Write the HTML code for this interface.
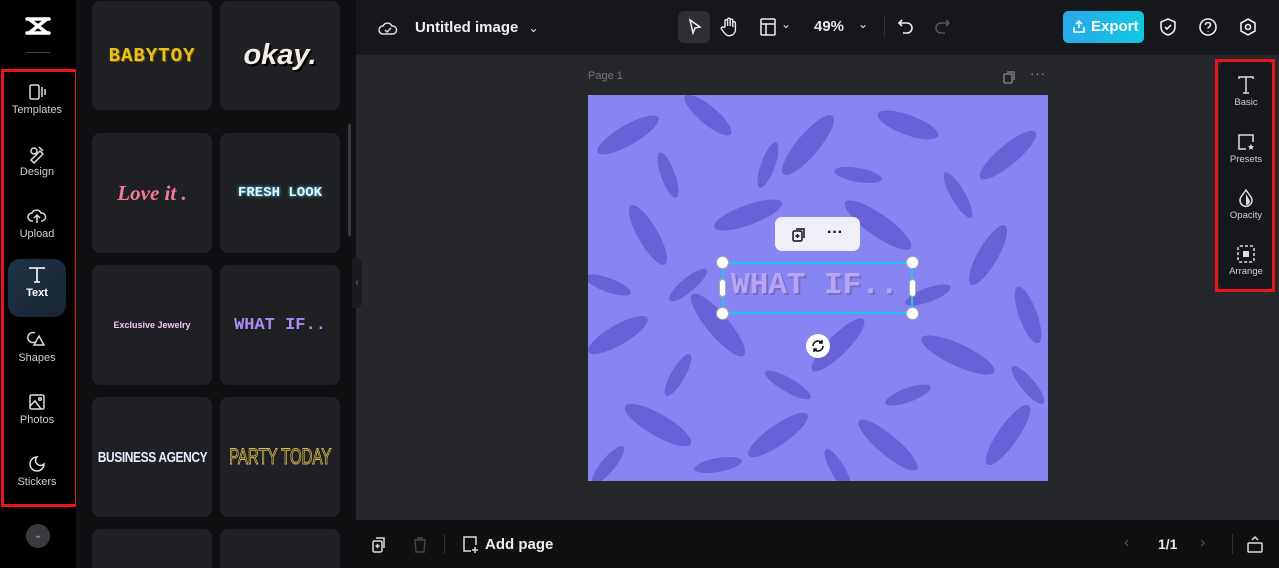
<!DOCTYPE html>
<html style="width:1279px;height:568px;overflow:hidden"><head><meta charset="utf-8"><style>
*{box-sizing:border-box;margin:0;padding:0}
body{width:1279px;height:568px;overflow:hidden;background:#26272b;font-family:"Liberation Sans",sans-serif;position:relative;color:#e6e6e6}
.abs{position:absolute}
#rail{left:0;top:0;width:76px;height:568px;background:#000}
#panel{left:76px;top:0;width:280px;height:568px;background:#0f1012;overflow:hidden}
.card{position:absolute;width:120px;height:120px;background:#1f2024;border-radius:8px;display:flex;align-items:center;justify-content:center;white-space:nowrap}
.nav{position:absolute;left:8px;width:58px;height:58px;text-align:center;font-size:11px;color:#d0d0d0}
.nav svg{display:block;margin:6px auto 2px}
#top{left:356px;top:0;width:923px;height:55px;background:#16171a}
#bot{left:356px;top:520px;width:923px;height:48px;background:#0f1012}
.rp{position:absolute;left:1219px;width:54px;text-align:center;font-size:9.5px;color:#d0d0d0}
.rp svg{display:block;margin:0 auto 2px}
</style></head><body>
<div id="rail" class="abs">
 <svg class="abs" style="left:24px;top:15px" width="28" height="22" viewBox="0 0 28 22"><path d="M3 4h22M3 18h22M5 4l18 14M23 4L5 18" stroke="#fff" stroke-width="3.5" fill="none" stroke-linecap="round"/></svg>
 <div class="abs" style="left:26px;top:52px;width:24px;height:1px;background:#444"></div>
 <div class="nav" style="top:76px"><svg width="20" height="20" viewBox="0 0 20 20" fill="none" stroke="#ddd" stroke-width="1.5"><rect x="3" y="3" width="9" height="14" rx="1.5"/><path d="M15 5v10M18 7v6"/></svg>Templates</div>
 <div class="nav" style="top:138px"><svg width="20" height="20" viewBox="0 0 20 20" fill="none" stroke="#ddd" stroke-width="1.5"><circle cx="7" cy="7" r="3"/><path d="M4 16l9-9 3 3-9 9zM12 3l4 4"/></svg>Design</div>
 <div class="nav" style="top:200px"><svg width="20" height="20" viewBox="0 0 20 20" fill="none" stroke="#ddd" stroke-width="1.5"><path d="M6 15H5a4 4 0 010-8 5 5 0 019 0 4 4 0 011 8h-1M10 17V10M7 12l3-3 3 3"/></svg>Upload</div>
 <div class="nav" style="top:259px;background:linear-gradient(135deg,#1d3448,#1a2430);border-radius:12px;color:#fff;font-weight:bold"><svg width="20" height="20" viewBox="0 0 20 20" fill="none" stroke="#fff" stroke-width="1.6"><path d="M3 4V3h14v1M10 3v14M7 17h6"/></svg>Text</div>
 <div class="nav" style="top:324px"><svg width="20" height="20" viewBox="0 0 20 20" fill="none" stroke="#ddd" stroke-width="1.5"><path d="M8 3a5 5 0 100 9M12 6l5 9H7z"/></svg>Shapes</div>
 <div class="nav" style="top:386px"><svg width="20" height="20" viewBox="0 0 20 20" fill="none" stroke="#ddd" stroke-width="1.5"><rect x="3" y="3" width="14" height="14" rx="1.5"/><circle cx="13" cy="7" r="1.3"/><path d="M3 14l5-5 6 8"/></svg>Photos</div>
 <div class="nav" style="top:448px"><svg width="20" height="20" viewBox="0 0 20 20" fill="none" stroke="#ddd" stroke-width="1.5"><path d="M10 3a7 7 0 107 7 4 4 0 01-7-7z"/></svg>Stickers</div>
 <div class="abs" style="left:1px;top:69px;width:77px;height:438px;border:3px solid #e8161b"></div>
 <div class="abs" style="left:26px;top:524px;width:24px;height:24px;border-radius:50%;background:#3a3b3f;color:#aaa;font-size:10px;text-align:center;line-height:24px">⌄</div>
</div>
<div id="panel" class="abs">
 <div class="card" style="left:16px;top:1px;height:109px"><span style="font:900 19px 'Liberation Mono',monospace;color:#e8c21c;letter-spacing:1px;text-shadow:1px 1px #7a5a00">BABYTOY</span></div>
 <div class="card" style="left:144px;top:1px;height:109px"><span style="font:italic 900 29px 'Liberation Sans';color:#f4efe6;text-shadow:2px 2px #000">okay.</span></div>
 <div class="card" style="left:16px;top:133px"><span style="font:italic bold 21px 'Liberation Serif';color:#f47a9a">Love it .</span></div>
 <div class="card" style="left:144px;top:133px"><span style="font:900 14px 'Liberation Mono';color:#dff6ff;text-shadow:0 0 3px #4fd0f0">FRESH LOOK</span></div>
 <div class="card" style="left:16px;top:265px"><span style="font:bold 9px 'Liberation Sans';color:#f2c8f2">Exclusive Jewelry</span></div>
 <div class="card" style="left:144px;top:265px"><span style="font:900 17px 'Liberation Mono';color:#a98af0">WHAT IF..</span></div>
 <div class="card" style="left:16px;top:397px"><span style="display:inline-block;font:bold 15px 'Liberation Sans';color:#e8ecff;transform:scaleX(.8);letter-spacing:-.5px">BUSINESS AGENCY</span></div>
 <div class="card" style="left:144px;top:397px"><span style="display:inline-block;font:22px 'Liberation Sans';color:#1f2024;-webkit-text-stroke:1px #d8bd52;transform:scaleX(.68)">PARTY TODAY</span></div>
 <div class="card" style="left:16px;top:529px;height:39px;border-radius:8px 8px 0 0"></div>
 <div class="card" style="left:144px;top:529px;height:39px;border-radius:8px 8px 0 0"></div>
 <div class="abs" style="left:272px;top:124px;width:3px;height:112px;background:#3a3b3f;border-radius:2px"></div>
 <div class="abs" style="left:276px;top:258px;width:4px;height:50px;background:#1a1b1e"></div>
</div>
<div class="abs" style="left:352px;top:258px;width:10px;height:50px;background:#1a1b1e;border-radius:0 6px 6px 0;color:#777;font-size:10px;line-height:50px;text-align:center">‹</div>
<div id="top" class="abs">
 <svg class="abs" style="left:22px;top:18px" width="20" height="20" viewBox="0 0 20 20" fill="none" stroke="#ddd" stroke-width="1.5"><path d="M6 16H5a4 4 0 010-8 5 5 0 019 0 4 4 0 011 8H6zM7 12l2 2 4-4"/></svg>
 <div class="abs" style="left:59px;top:19px;font-size:15px;font-weight:bold;color:#eee">Untitled image <span style="font-weight:normal;font-size:12px;margin-left:6px">⌄</span></div>
 <div class="abs" style="left:322px;top:11px;width:32px;height:32px;background:#2e2f33;border-radius:6px"></div>
 <svg class="abs" style="left:330px;top:18px" width="18" height="18" viewBox="0 0 18 18" fill="none" stroke="#eee" stroke-width="1.5"><path d="M4 2l10 7-5 1-2 5z"/></svg>
 <svg class="abs" style="left:364px;top:17px" width="18" height="20" viewBox="0 0 18 20" fill="none" stroke="#eee" stroke-width="1.4"><path d="M5 10V4a1.3 1.3 0 012.6 0v5V2.5a1.3 1.3 0 012.6 0V9V3.5a1.3 1.3 0 012.6 0V10V6a1.3 1.3 0 012.6 0v7a6 6 0 01-11 3l-3-4a1.3 1.3 0 012-1.6z"/></svg>
 <svg class="abs" style="left:404px;top:18px" width="16" height="18" viewBox="0 0 16 18" fill="none" stroke="#eee" stroke-width="1.5"><rect x="1" y="1" width="14" height="16" rx="1"/><path d="M1 6h14M6 6v11"/></svg>
 <div class="abs" style="left:425px;top:17px;font-size:12px">⌄</div>
 <div class="abs" style="left:458px;top:18px;font-size:15px;font-weight:bold">49%</div>
 <div class="abs" style="left:502px;top:17px;font-size:12px">⌄</div>
 <div class="abs" style="left:528px;top:17px;width:1px;height:20px;background:#333"></div>
 <svg class="abs" style="left:541px;top:18px" width="18" height="18" viewBox="0 0 18 18" fill="none" stroke="#eee" stroke-width="1.6"><path d="M5 2L2 5l3 3M2 5h8a5 5 0 010 10H6"/></svg>
 <svg class="abs" style="left:577px;top:18px" width="18" height="18" viewBox="0 0 18 18" fill="none" stroke="#555" stroke-width="1.6"><path d="M13 2l3 3-3 3M16 5H8a5 5 0 000 10h4"/></svg>
 <div class="abs" style="left:707px;top:11px;width:81px;height:32px;border-radius:5px;background:linear-gradient(90deg,#2aa8ea,#10c8e0);color:#fff;font-weight:bold;font-size:15px;line-height:32px;padding-left:28px">Export</div>
 <svg class="abs" style="left:716px;top:19px" width="14" height="15" viewBox="0 0 14 15" fill="none" stroke="#fff" stroke-width="1.5"><path d="M7 9V2M4 5l3-3 3 3M2 8v5h10V8"/></svg>
 <svg class="abs" style="left:802px;top:17px" width="20" height="20" viewBox="0 0 20 20" fill="none" stroke="#eee" stroke-width="1.6"><path d="M10 2l7 3v5c0 4-3 7-7 8-4-1-7-4-7-8V5zM7 10l2 2 4-4"/></svg>
 <svg class="abs" style="left:842px;top:17px" width="20" height="20" viewBox="0 0 20 20" fill="none" stroke="#eee" stroke-width="1.6"><circle cx="10" cy="10" r="8"/><path d="M7.5 8a2.5 2.5 0 115 0c0 1.5-2.5 2-2.5 3.5M10 14v.5"/></svg>
 <svg class="abs" style="left:882px;top:17px" width="20" height="20" viewBox="0 0 20 20" fill="none" stroke="#eee" stroke-width="1.6"><path d="M10 2l7 4v8l-7 4-7-4V6z"/><circle cx="10" cy="10" r="2.5"/></svg>
</div>
<div class="abs" style="left:588px;top:70px;font-size:11px;color:#777">Page 1</div>
<svg class="abs" style="left:1002px;top:70px" width="14" height="14" viewBox="0 0 14 14" fill="none" stroke="#888" stroke-width="1.3"><rect x="2" y="4" width="8" height="9" rx="1"/><path d="M5 2h7v8"/></svg>
<div class="abs" style="left:1030px;top:66px;font-size:13px;color:#999;letter-spacing:1px">···</div>
<svg class="abs" style="left:588px;top:95px" width="460" height="386" viewBox="0 0 460 386">
 <rect width="460" height="386" fill="#8884f2"/>
 <g fill="#5a54cc" opacity=".7">
  <ellipse cx="40" cy="40" rx="35" ry="10" transform="rotate(-30 40 40)"/><ellipse cx="120" cy="20" rx="30" ry="9" transform="rotate(40 120 20)"/>
  <ellipse cx="220" cy="50" rx="38" ry="11" transform="rotate(-50 220 50)"/><ellipse cx="320" cy="30" rx="32" ry="10" transform="rotate(20 320 30)"/>
  <ellipse cx="420" cy="60" rx="36" ry="10" transform="rotate(-40 420 60)"/><ellipse cx="60" cy="140" rx="34" ry="10" transform="rotate(60 60 140)"/>
  <ellipse cx="160" cy="120" rx="36" ry="10" transform="rotate(-20 160 120)"/><ellipse cx="290" cy="130" rx="40" ry="11" transform="rotate(35 290 130)"/>
  <ellipse cx="400" cy="160" rx="34" ry="10" transform="rotate(-60 400 160)"/><ellipse cx="30" cy="240" rx="34" ry="10" transform="rotate(-30 30 240)"/>
  <ellipse cx="130" cy="230" rx="40" ry="11" transform="rotate(50 130 230)"/><ellipse cx="250" cy="250" rx="36" ry="10" transform="rotate(-45 250 250)"/>
  <ellipse cx="370" cy="260" rx="40" ry="11" transform="rotate(25 370 260)"/><ellipse cx="440" cy="220" rx="30" ry="9" transform="rotate(70 440 220)"/>
  <ellipse cx="70" cy="330" rx="38" ry="11" transform="rotate(30 70 330)"/><ellipse cx="190" cy="340" rx="36" ry="10" transform="rotate(-35 190 340)"/>
  <ellipse cx="300" cy="350" rx="38" ry="10" transform="rotate(40 300 350)"/><ellipse cx="420" cy="340" rx="36" ry="10" transform="rotate(-55 420 340)"/>
  <ellipse cx="80" cy="80" rx="24" ry="7" transform="rotate(70 80 80)"/><ellipse cx="180" cy="70" rx="24" ry="7" transform="rotate(-70 180 70)"/>
  <ellipse cx="270" cy="80" rx="24" ry="7" transform="rotate(10 270 80)"/><ellipse cx="370" cy="100" rx="26" ry="7" transform="rotate(60 370 100)"/>
  <ellipse cx="20" cy="190" rx="24" ry="7" transform="rotate(20 20 190)"/><ellipse cx="100" cy="190" rx="24" ry="7" transform="rotate(-40 100 190)"/>
  <ellipse cx="340" cy="200" rx="24" ry="7" transform="rotate(-20 340 200)"/><ellipse cx="90" cy="280" rx="24" ry="7" transform="rotate(-60 90 280)"/>
  <ellipse cx="200" cy="290" rx="26" ry="7" transform="rotate(30 200 290)"/><ellipse cx="320" cy="300" rx="24" ry="7" transform="rotate(-20 320 300)"/>
  <ellipse cx="440" cy="290" rx="24" ry="7" transform="rotate(50 440 290)"/><ellipse cx="130" cy="370" rx="24" ry="7" transform="rotate(-10 130 370)"/>
  <ellipse cx="250" cy="375" rx="24" ry="7" transform="rotate(60 250 375)"/><ellipse cx="20" cy="370" rx="24" ry="7" transform="rotate(-50 20 370)"/>
 </g>
</svg>
<div class="abs" style="left:775px;top:217px;width:85px;height:34px;background:#f0eff8;border-radius:7px"></div>
<svg class="abs" style="left:791px;top:227px" width="16" height="16" viewBox="0 0 16 16" fill="none" stroke="#111" stroke-width="1.5"><rect x="2" y="4" width="9" height="10" rx="1.5"/><path d="M5 2h8v9M6.5 7v4M4.5 9h4"/></svg>
<div class="abs" style="left:827px;top:224px;font-size:16px;color:#111;font-weight:bold">···</div>
<div class="abs" style="left:722px;top:262px;width:191px;height:52px;border:2px solid #1ec8e8"></div>
<div class="abs" style="left:731px;top:268px;font:900 31px 'Liberation Mono',monospace;color:#b7a6f6;text-shadow:2px 2px #7c6ac8;letter-spacing:0px;white-space:nowrap">WHAT IF..</div>
<div class="abs" style="left:716px;top:256px;width:13px;height:13px;border-radius:50%;background:#fff;border:1px solid #aaa"></div>
<div class="abs" style="left:906px;top:256px;width:13px;height:13px;border-radius:50%;background:#fff;border:1px solid #aaa"></div>
<div class="abs" style="left:716px;top:307px;width:13px;height:13px;border-radius:50%;background:#fff;border:1px solid #aaa"></div>
<div class="abs" style="left:906px;top:307px;width:13px;height:13px;border-radius:50%;background:#fff;border:1px solid #aaa"></div>
<div class="abs" style="left:719px;top:279px;width:7px;height:18px;border-radius:4px;background:#fff;border:1px solid #aaa"></div>
<div class="abs" style="left:909px;top:279px;width:7px;height:18px;border-radius:4px;background:#fff;border:1px solid #aaa"></div>
<div class="abs" style="left:806px;top:334px;width:24px;height:24px;border-radius:50%;background:#fff"></div>
<svg class="abs" style="left:811px;top:339px" width="14" height="14" viewBox="0 0 14 14" fill="none" stroke="#111" stroke-width="1.5"><path d="M2 7a5 5 0 019-3M12 7a5 5 0 01-9 3M11 1v3H8M3 13v-3h3"/></svg>
<div class="abs" style="left:1219px;top:61px;width:54px;height:229px;background:#16171a;border-radius:8px"></div>
<div class="rp" style="top:75px"><svg width="20" height="20" viewBox="0 0 20 20" fill="none" stroke="#ddd" stroke-width="1.5"><path d="M3 4V2h14v2M10 2v16M7 18h6"/></svg>Basic</div>
<div class="rp" style="top:132px"><svg width="20" height="20" viewBox="0 0 20 20" fill="none" stroke="#ddd" stroke-width="1.5"><path d="M10 17H3V3h14v7"/><path d="M15 12l1 2 2 .3-1.5 1.4.4 2-1.9-1-1.9 1 .4-2L12 14.3l2-.3z" fill="#ddd" stroke="none"/></svg>Presets</div>
<div class="rp" style="top:188px"><svg width="20" height="20" viewBox="0 0 20 20" fill="none" stroke="#ddd" stroke-width="1.5"><path d="M10 2l5 7a6 6 0 11-10 0z"/><path d="M10 6v11a4 4 0 004-4z" fill="#ddd" stroke="none"/></svg>Opacity</div>
<div class="rp" style="top:244px"><svg width="20" height="20" viewBox="0 0 20 20" fill="none" stroke="#ddd" stroke-width="1.5" stroke-dasharray="3 2"><rect x="2" y="2" width="16" height="16" rx="2"/><rect x="7" y="7" width="6" height="6" fill="#ddd" stroke="none"/></svg>Arrange</div>
<div class="abs" style="left:1215px;top:59px;width:60px;height:233px;border:3px solid #e8161b"></div>
<div id="bot" class="abs">
 <svg class="abs" style="left:15px;top:16px" width="16" height="18" viewBox="0 0 16 18" fill="none" stroke="#ddd" stroke-width="1.5"><rect x="2" y="5" width="9" height="11" rx="1.5"/><path d="M5 2h8v10M6.5 8v4M4.5 10h4"/></svg>
 <svg class="abs" style="left:56px;top:16px" width="16" height="18" viewBox="0 0 16 18" fill="none" stroke="#444" stroke-width="1.5"><path d="M2 4h12M6 4V2h4v2M3 4l1 12h8l1-12"/></svg>
 <div class="abs" style="left:88px;top:14px;width:1px;height:20px;background:#333"></div>
 <svg class="abs" style="left:106px;top:15px" width="18" height="20" viewBox="0 0 18 20" fill="none" stroke="#ddd" stroke-width="1.5"><path d="M9 16H2V2h12v8M13 12v6M10 15h6"/></svg>
 <div class="abs" style="left:129px;top:16px;font-size:15px;font-weight:bold;color:#eee">Add page</div>
 <div class="abs" style="left:768px;top:14px;font-size:16px;color:#555">‹</div>
 <div class="abs" style="left:802px;top:16px;font-size:14px;font-weight:bold">1/1</div>
 <div class="abs" style="left:844px;top:14px;font-size:16px;color:#555">›</div>
 <div class="abs" style="left:876px;top:14px;width:1px;height:20px;background:#333"></div>
 <svg class="abs" style="left:890px;top:14px" width="18" height="20" viewBox="0 0 18 20" fill="none" stroke="#ddd" stroke-width="1.5"><rect x="2" y="9" width="14" height="9" rx="1"/><path d="M6 6l3-3 3 3"/></svg>
</div>
</body></html>
